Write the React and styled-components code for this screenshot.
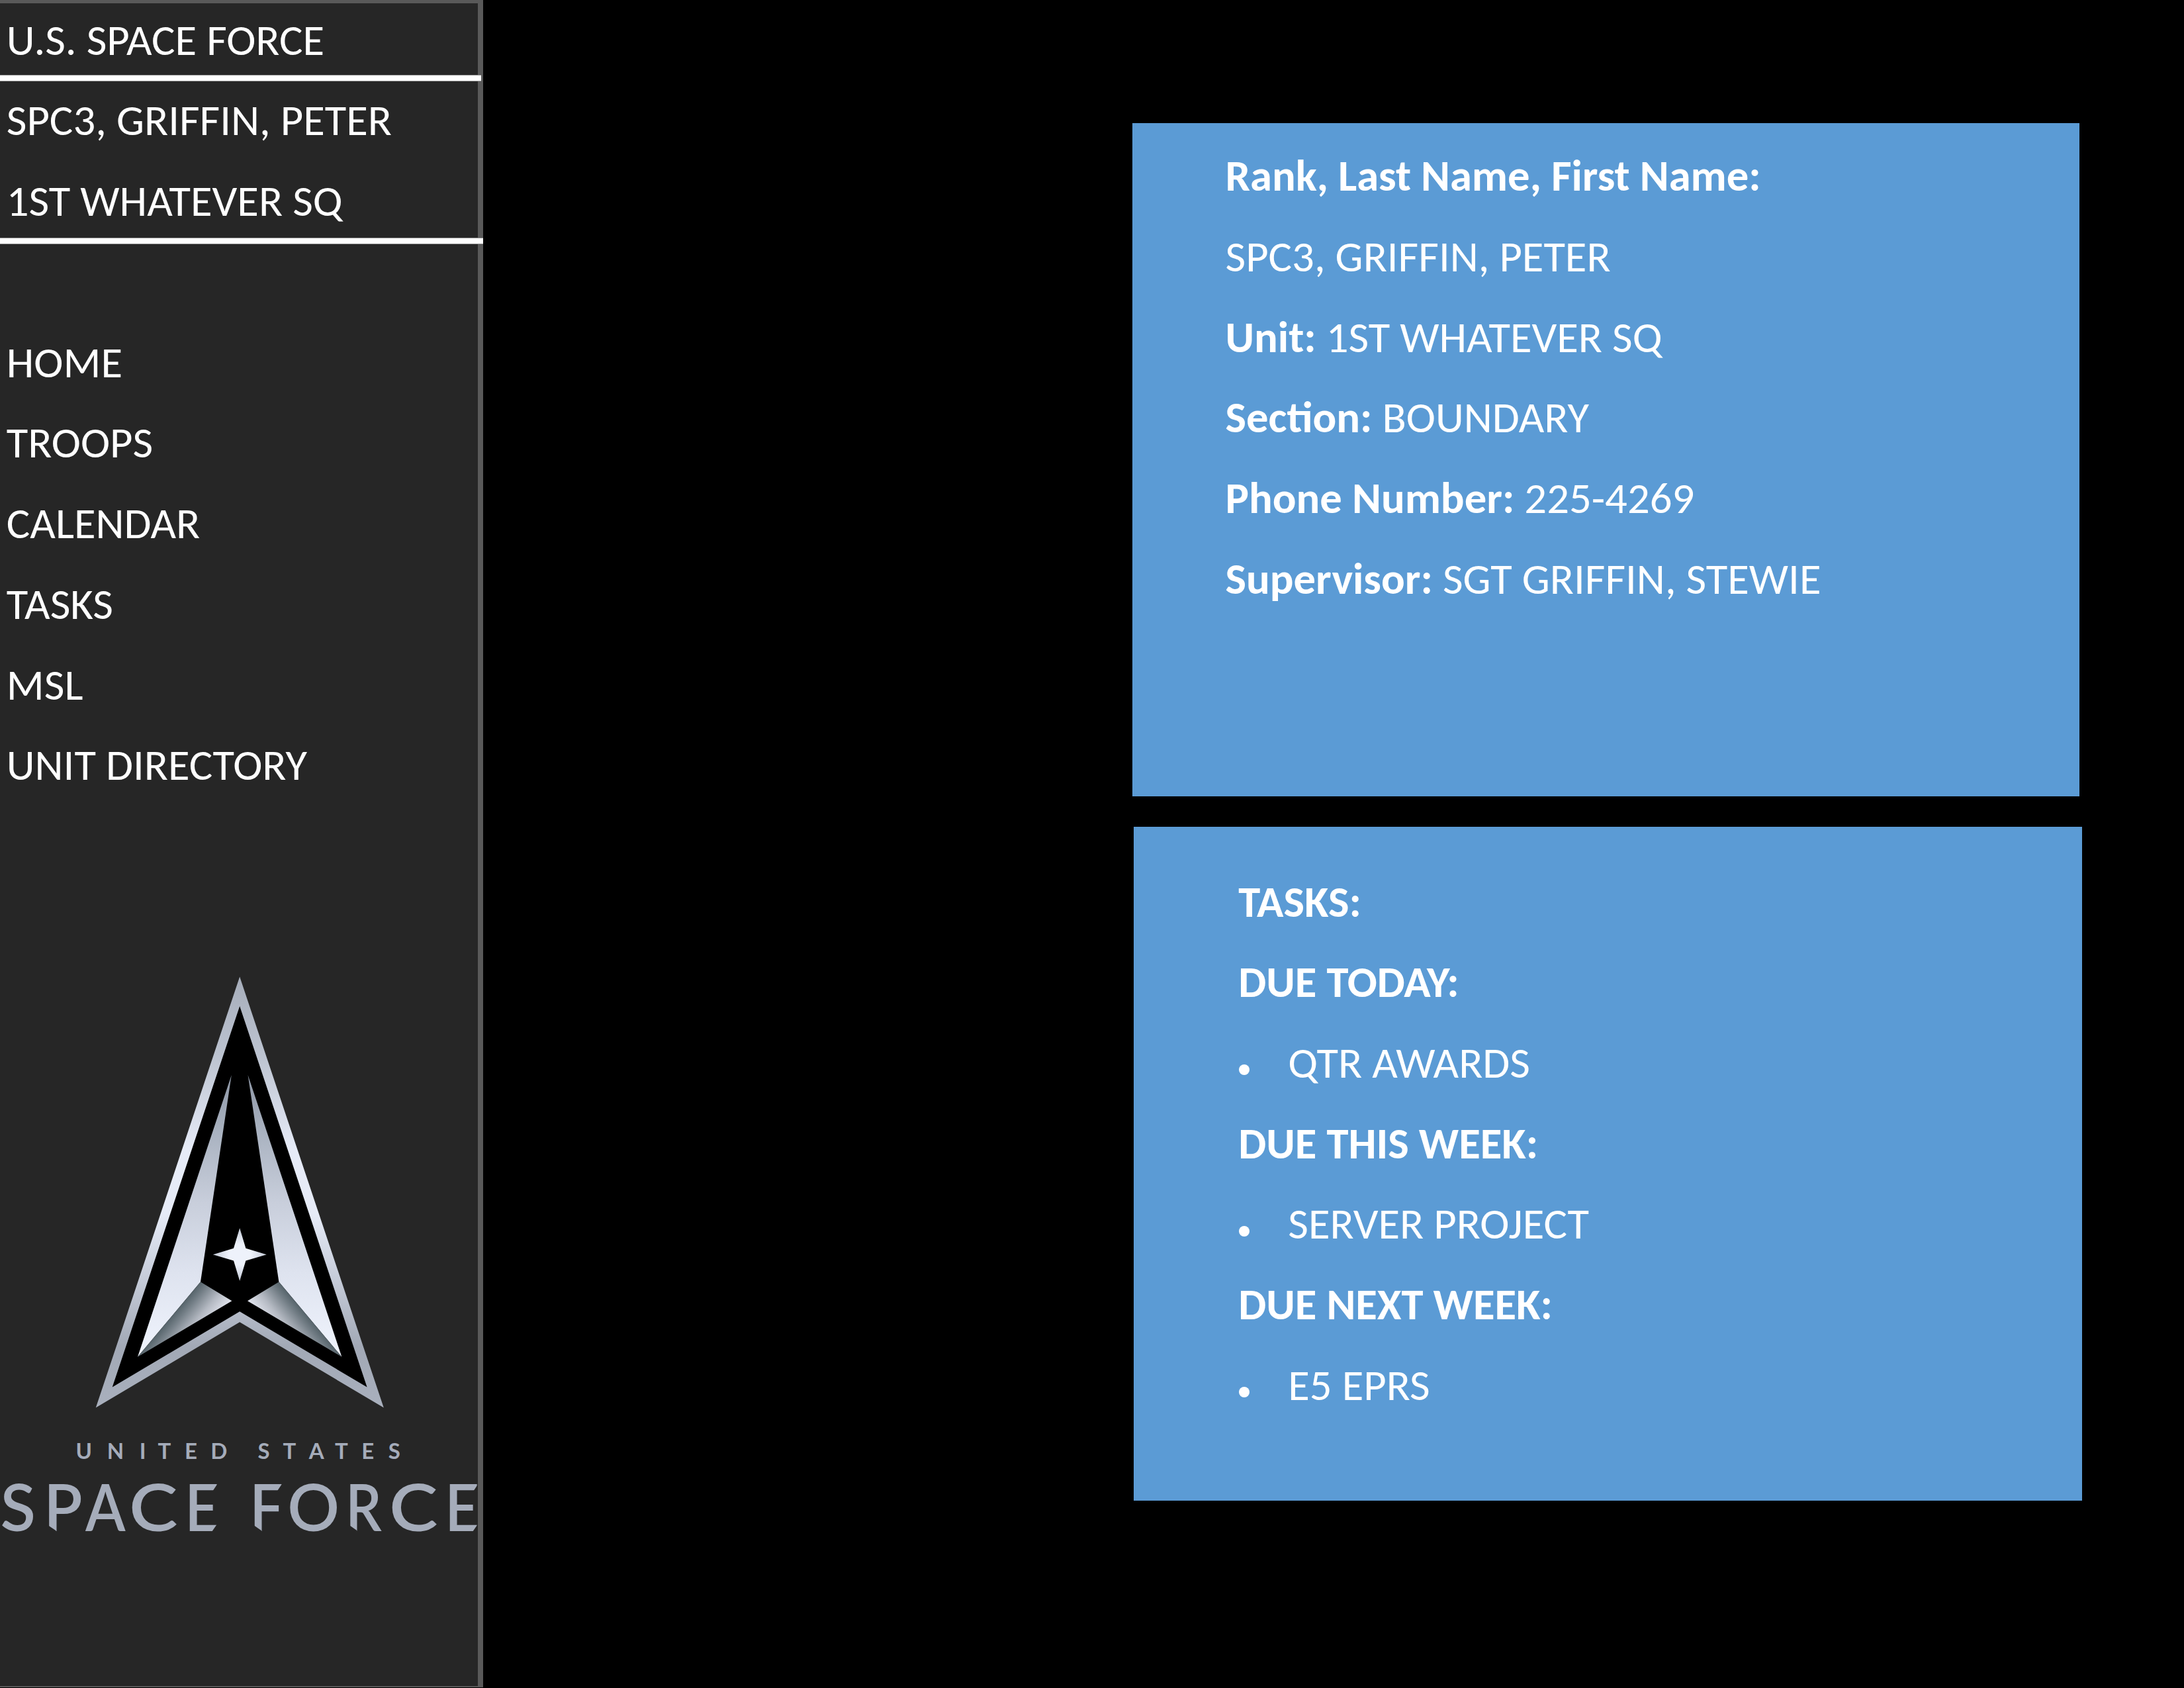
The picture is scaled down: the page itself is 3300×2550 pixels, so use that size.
import React from "react";
import styled, { createGlobalStyle } from "styled-components";

const GlobalStyle = createGlobalStyle`
  * { box-sizing: border-box; }
  body {
    margin: 0;
    background: #000;
    color: #fff;
    font-family: Carlito, Calibri, Lato, sans-serif;
    font-size: 66.667px;
  }
`;

const Page = styled.div`
  display: flex;
  width: 3300px;
  height: 2550px;
  overflow: hidden;
  background: #000;
`;

const Sidebar = styled.aside`
  display: flex;
  flex-direction: column;
  flex: none;
  width: 730px;
  height: 2549px;
  background: #262626;
  border: 0 solid #595959;
  border-width: 5px 8px 2px 0;
`;

const Line = styled.div`
  height: 110px;
  line-height: 110px;
  white-space: pre;
`;

const Brand = styled.header`
  height: 108px;
  padding-left: 9.8px;
  line-height: 111px;
  white-space: pre;
`;

const Divider = styled.div`
  flex: none;
  height: 10px;
  margin-right: ${(p) => -p.$overhang}px;
  background: #fff;
  border: 0 solid #8c8c8c;
  border-width: 1px 0;
`;

const Stack = styled.div`
  display: flex;
  flex-direction: column;
  gap: 11.7px;
`;

const UserInfo = styled(Stack)`
  height: 236px;
  padding: 4.3px 0 0 9.8px;
`;

const Nav = styled(Stack).attrs({ as: "nav" })`
  margin-top: 123.8px;
  padding-left: 9.8px;
`;

const Emblem = styled.div`
  position: relative;
  width: 722px;
  margin-top: 248.7px;
`;

const Arrowhead = styled.svg`
  display: block;
  width: 722px;
  height: 680px;
`;

const Wordmark = styled.div`
  display: flex;
  height: ${(p) => p.$line}px;
  margin-top: ${(p) => p.$gap}px;
  padding-left: ${(p) => p.$indent}px;
  color: #a5acba;
  font-family: Lato, sans-serif;
  font-weight: ${(p) => p.$weight};
  font-size: ${(p) => p.$size}px;
  line-height: ${(p) => p.$line}px;
  white-space: pre;
`;

const Letter = styled.span`
  flex: none;
  width: ${(p) => p.$advance}px;
  transform: scaleX(${(p) => p.$stretch || 1});
  transform-origin: 0 0;
`;

const Cuts = styled.svg`
  position: absolute;
  left: 0;
  bottom: 0;
  width: 722px;
  height: 100px;
`;

const Main = styled.main`
  display: flex;
  flex-direction: column;
  gap: 46px;
  padding: 186px 0 0 981px;
`;

const Profile = styled.section`
  width: 1431px;
  height: 1017px;
  padding: 25.4px 0 0 140.5px;
  background: #5b9bd5;
`;

const Tasks = styled.section`
  width: 1433px;
  height: 1018px;
  margin-left: 2px;
  padding: 58.7px 0 0 158.3px;
  background: #5b9bd5;
`;

const Label = styled.strong`
  font-weight: 700;
`;

const TaskItem = styled(Line)`
  display: flex;
  align-items: center;
  &::before {
    content: "";
    width: 16px;
    height: 16px;
    margin: 20.6px 58.3px 0 0.7px;
    border-radius: 50%;
    background: #fff;
  }
`;

const NAV = ["HOME", "TROOPS", "CALENDAR", "TASKS", "MSL", "UNIT DIRECTORY"];

const PROFILE = [
  ["Rank, Last Name, First Name:", ""],
  ["", "SPC3, GRIFFIN, PETER"],
  ["Unit:", " 1ST WHATEVER SQ"],
  ["Section:", " BOUNDARY"],
  ["Phone Number:", " 225-4269"],
  ["Supervisor:", " SGT GRIFFIN, STEWIE"],
];

const TASKS = [
  ["DUE TODAY:", "QTR AWARDS"],
  ["DUE THIS WEEK:", "SERVER PROJECT"],
  ["DUE NEXT WEEK:", "E5 EPRS"],
];

// Each letter with its advance in pixels and, where needed, a horizontal stretch.
const UNITED_STATES = [
  ["U", 47.4], ["N", 48.9], ["I", 27.8], ["T", 40.5], ["E", 39.3], ["D", 41],
  [" ", 30.3], ["S", 37.9], ["T", 39.3], ["A", 39.2], ["T", 40.2], ["E", 40.7], ["S", 30],
];

const SPACE_FORCE = [
  ["S", 65.6, 1], ["P", 63.5, 0.98], ["A", 65.5, 0.9], ["C", 83.6, 1.13], ["E", 60, 0.93],
  [" ", 38.2], ["F", 57.5, 0.93], ["O", 87.5, 1], ["R", 66.2, 0.88], ["C", 84.3, 1.13], ["E", 50, 0.93],
];

const Letters = ({ data }) =>
  data.map(([char, advance, stretch], i) => (
    <Letter key={i} $advance={advance} $stretch={stretch}>{char}</Letter>
  ));

function SpaceForceEmblem() {
  return (
    <Emblem>
      <Arrowhead viewBox="0 1460 722 680">
        <defs>
          <linearGradient id="rim" gradientUnits="userSpaceOnUse" x1="0" y1="1476" x2="0" y2="2126">
            <stop offset="0" stopColor="#a6adba" />
            <stop offset="0.18" stopColor="#bcc3d0" />
            <stop offset="0.4" stopColor="#e6ebf7" />
            <stop offset="0.55" stopColor="#e6ebf7" />
            <stop offset="0.7" stopColor="#c6ccd9" />
            <stop offset="0.86" stopColor="#a2a9b6" />
            <stop offset="1" stopColor="#a9b0bd" />
          </linearGradient>
          <linearGradient id="wing" gradientUnits="userSpaceOnUse" x1="0" y1="1624" x2="0" y2="2050">
            <stop offset="0" stopColor="#8e97a6" />
            <stop offset="0.2" stopColor="#a9b2c0" />
            <stop offset="0.45" stopColor="#c8cedb" />
            <stop offset="0.7" stopColor="#dee3ef" />
            <stop offset="1" stopColor="#f0f4fd" />
          </linearGradient>
          <linearGradient id="facet" gradientUnits="userSpaceOnUse" x1="303" y1="1936.6" x2="344.6" y2="1971.6">
            <stop offset="0" stopColor="#56646b" />
            <stop offset="0.2" stopColor="#737e86" />
            <stop offset="0.6" stopColor="#b4b9c2" />
            <stop offset="1" stopColor="#e2e5ee" />
          </linearGradient>
          <radialGradient id="star">
            <stop offset="0.4" stopColor="#eef2fb" />
            <stop offset="1" stopColor="#c3cad6" />
          </radialGradient>
          <g id="side">
            <polygon fill="url(#wing)" points="349.8,1624 303,1936.6 208,2049.8" />
            <polygon fill="url(#facet)" points="303,1936.6 350.4,1965.2 208,2049.8" />
          </g>
        </defs>
        <polygon fill="url(#rim)" points="362.2,1475.5 579.8,2126.6 362.2,1997.3 144.8,2126.6" />
        <polygon fill="#000" points="362.2,1520 554.6,2095.6 362.2,1981.2 169.7,2095.6" />
        <use href="#side" />
        <use href="#side" transform="translate(724.4 0) scale(-1 1)" />
        <polygon
          fill="url(#star)"
          points="362.2,1855.2 371.4,1885.8 402.8,1895.2 371.4,1904.6 362.2,1935 353,1904.6 321.8,1895.2 353,1885.8"
        />
      </Arrowhead>
      <Wordmark $gap={31.3} $indent={114.4} $line={40} $size={33} $weight={700}>
        <Letters data={UNITED_STATES} />
      </Wordmark>
      <Wordmark $gap={13.7} $indent={0.4} $line={100} $size={98} $weight={600}>
        <Letters data={SPACE_FORCE} />
      </Wordmark>
      <Cuts viewBox="0 2225 722 100" fill="#262626">
        <path d="M71 2304.5H73L84.5 2312.3V2315H71Z" />
        <path d="M382 2304.5H384L395 2312.3V2315H382Z" />
        <path d="M526.5 2304.5H528.5L539.5 2312.3V2315H526.5Z" />
        <path d="M329 2241L321 2253H329ZM329 2301L320 2314H329Z" />
        <path d="M426.500 2241L418.500 2253H427.500V2241Z" />
        <path d="M723 2241L715 2253H723ZM723 2301L714 2314H723Z" />
      </Cuts>
    </Emblem>
  );
}

export default function App() {
  return (
    <Page>
      <GlobalStyle />
      <Sidebar>
        <Brand>U.S. SPACE FORCE</Brand>
        <Divider $overhang={5} />
        <UserInfo>
          <Line>SPC3, GRIFFIN, PETER</Line>
          <Line>1ST WHATEVER SQ</Line>
        </UserInfo>
        <Divider $overhang={8} />
        <Nav>
          {NAV.map((item) => (
            <Line key={item}>{item}</Line>
          ))}
        </Nav>
        <SpaceForceEmblem />
      </Sidebar>
      <Main>
        <Profile>
          <Stack>
            {PROFILE.map(([label, value]) => (
              <Line key={label + value}>
                {label && <Label>{label}</Label>}
                {value}
              </Line>
            ))}
          </Stack>
        </Profile>
        <Tasks>
          <Stack>
            <Line><Label>TASKS:</Label></Line>
            {TASKS.map(([due, task]) => (
              <React.Fragment key={due}>
                <Line><Label>{due}</Label></Line>
                <TaskItem>{task}</TaskItem>
              </React.Fragment>
            ))}
          </Stack>
        </Tasks>
      </Main>
    </Page>
  );
}
